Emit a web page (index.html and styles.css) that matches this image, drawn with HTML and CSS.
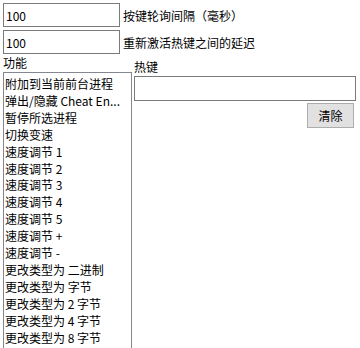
FILE: index.html
```html
<!doctype html>
<html>
  <head>
    <meta charset="UTF-8">
    <title>热键设置</title>
    <link rel="stylesheet" href="styles.css">
  </head>
  <body>
    <div class="settings">
      <div class="row">
        <input class="num-input" type="text" value="100">
        <span class="row-label">按键轮询间隔（毫秒）</span>
      </div>
      <div class="row">
        <input class="num-input" type="text" value="100">
        <span class="row-label">重新激活热键之间的延迟</span>
      </div>

      <div class="main">
        <div class="func-col">
          <div class="caption">功能</div>
          <ul class="func-list">
            <li>附加到当前前台进程</li>
            <li>弹出/隐藏 Cheat En...</li>
            <li>暂停所选进程</li>
            <li>切换变速</li>
            <li>速度调节 1</li>
            <li>速度调节 2</li>
            <li>速度调节 3</li>
            <li>速度调节 4</li>
            <li>速度调节 5</li>
            <li>速度调节 +</li>
            <li>速度调节 -</li>
            <li>更改类型为 二进制</li>
            <li>更改类型为 字节</li>
            <li>更改类型为 2 字节</li>
            <li>更改类型为 4 字节</li>
            <li>更改类型为 8 字节</li>
          </ul>
        </div>

        <div class="key-col">
          <div class="caption">热键</div>
          <input class="key-input" type="text">
          <div class="actions">
            <button class="clear-button">清除</button>
          </div>
        </div>
      </div>
    </div>
  </body>
</html>
```

FILE: styles.css
```css
* {
  margin: 0;
  padding: 0;
  box-sizing: border-box;
}

html,
body {
  width: 360px;
  height: 348px;
  overflow: hidden;
}

body {
  font-family: "Noto Sans CJK SC", "Noto Sans", sans-serif;
  font-size: 12px;
  color: #000000;
  background: #ffffff;
  padding: 3px 4px 0 3px;
}

.row {
  display: flex;
  align-items: center;
  gap: 3px;
  margin-bottom: 3px;
}

.row + .row {
  margin-bottom: 1px;
}

.num-input {
  width: 117px;
  height: 24px;
  border: 1px solid #7a7a7a;
  padding: 0 2px;
  font: inherit;
  color: #000000;
  background: #ffffff;
  outline: none;
}

.row-label {
  line-height: 17px;
}

.main {
  display: flex;
  gap: 2px;
}

.func-col {
  width: 129px;
  flex-shrink: 0;
}

.caption {
  line-height: 15px;
  padding-bottom: 2px;
}

.func-list {
  list-style: none;
  border: 1px solid #828790;
  border-bottom: none;
  padding: 3px 1px 0 1px;
  height: 276px;
  overflow: hidden;
}

.func-list li {
  line-height: 16.9px;
  white-space: nowrap;
  overflow: hidden;
}

.key-col {
  flex: 1;
  padding-top: 4px;
  display: flex;
  flex-direction: column;
}

.key-input {
  height: 25px;
  border: 1px solid #7a7a7a;
  font: inherit;
  background: #ffffff;
  outline: none;
}

.actions {
  display: flex;
  justify-content: flex-end;
  padding-right: 2px;
  margin-top: 2px;
}

.clear-button {
  width: 47px;
  height: 25px;
  background: #e1e1e1;
  border: 1px solid #adadad;
  font-family: inherit;
  font-size: 12px;
  color: #000000;
}
```
